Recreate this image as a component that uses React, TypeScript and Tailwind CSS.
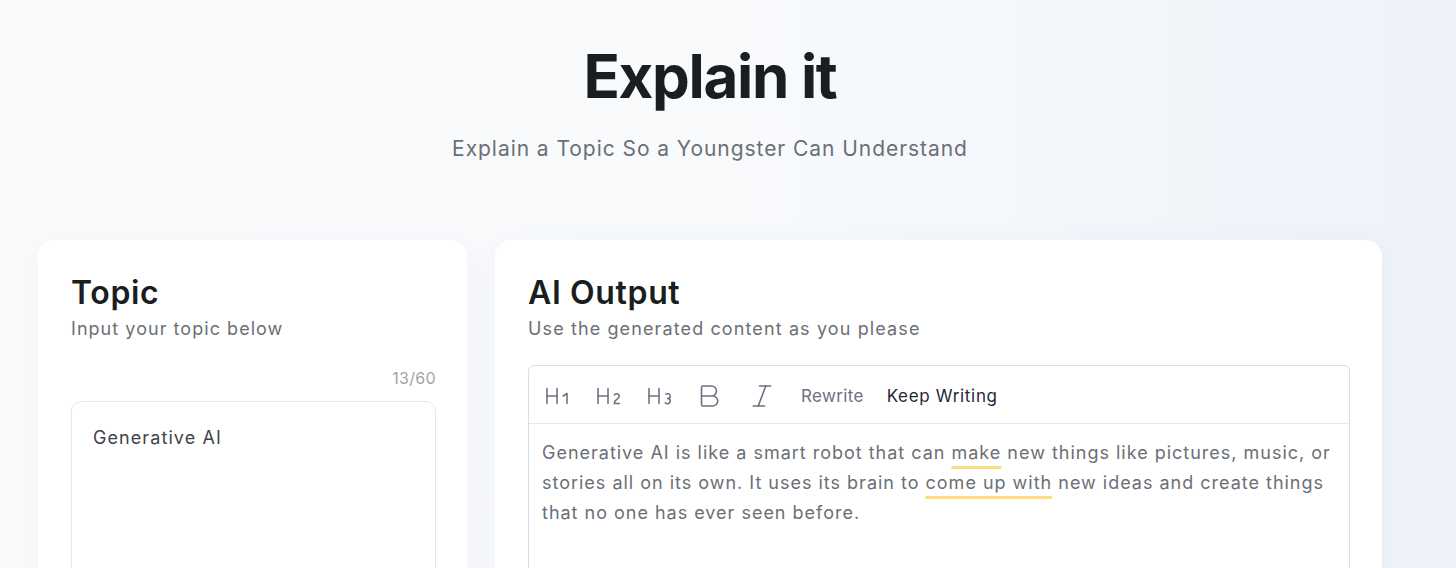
import { Heading1, Heading2, Heading3, Bold, Italic } from 'lucide-react'

const font = { fontFamily: 'Inter, "Noto Sans", sans-serif' }

function Toolbar() {
  return (
    <div className="flex h-[58px] items-center border-b border-[#e5e7eb] pl-[13px] pt-[2px]">
      <button className="text-[#6b7280]">
        <Heading1 size={30} strokeWidth={1.25} />
      </button>
      <button className="ml-[21px] text-[#6b7280]">
        <Heading2 size={30} strokeWidth={1.25} />
      </button>
      <button className="ml-[21px] text-[#6b7280]">
        <Heading3 size={30} strokeWidth={1.25} />
      </button>
      <button className="ml-[20px] text-[#6b7280]">
        <Bold size={30} strokeWidth={1.3} />
      </button>
      <button className="ml-[23px] text-[#6b7280]">
        <Italic size={30} strokeWidth={1.3} />
      </button>
      <button className="ml-[24px] pt-[3px] text-[17px] tracking-[0.02em] text-[#6b7280]">Rewrite</button>
      <button className="ml-[23px] pt-[3px] text-[17px] tracking-[0.04em] text-[#1f2937]">Keep Writing</button>
    </div>
  )
}

export default function App() {
  return (
    <div
      className="min-h-[568px] w-full bg-linear-to-r from-[#fbfbfc] via-[#f8fafc] to-[#eef3fa] pb-10"
      style={font}
    >
      <div className="ml-[38px] w-[1344px]">
        <header className="flex flex-col items-center pt-[46px]">
          <h1 className="text-[60px] font-bold leading-none tracking-[-0.022em] text-[#1a1e21]">Explain it</h1>
          <p className="mt-[29px] text-[21px] leading-7 tracking-[0.045em] text-[#6b6f76]">
            Explain a Topic So a Youngster Can Understand
          </p>
        </header>

        <div className="mt-[77px] flex gap-[28px]">
          <section className="h-[420px] w-[429px] rounded-2xl bg-white pl-[33px] pr-[31px] pt-[33px] shadow-[0_4px_30px_rgba(30,60,120,0.05)]">
            <h2 className="text-[32px] font-semibold leading-10 tracking-[0.02em] text-[#1a1e21]">Topic</h2>
            <p className="mt-[2px] text-[18px] leading-7 tracking-[0.058em] text-[#6b6f76]">Input your topic below</p>
            <div className="mt-[23px] text-right text-[16px] leading-6 tracking-[0.02em] text-[#a0a4aa]">13/60</div>
            <div className="mt-[11px] h-[300px] rounded-[10px] border border-[#e5e7eb] px-[21px] pt-[22px]">
              <p className="text-[18px] leading-7 tracking-[0.06em] text-[#3f444a]">Generative AI</p>
            </div>
          </section>

          <section className="h-[420px] w-[887px] rounded-2xl bg-white px-[33px] pt-[33px] shadow-[0_4px_30px_rgba(30,60,120,0.05)]">
            <h2 className="text-[32px] font-semibold leading-10 tracking-[0.02em] text-[#1a1e21]">AI Output</h2>
            <p className="mt-[2px] text-[18px] leading-7 tracking-[0.062em] text-[#6b6f76]">
              Use the generated content as you please
            </p>
            <div className="mt-[22px] h-[300px] w-[822px] rounded-md border border-[#d9dce0]">
              <Toolbar />
              <div className="px-[13px] pt-[14px] text-[18px] leading-[30px] tracking-[0.055em] text-[#6b6f76]">
                Generative AI is like a smart robot that can{' '}
                <span className="underline decoration-[#fddc7f] decoration-[3px] underline-offset-[7px]">make</span> new
                things like pictures, music, or stories all on its own. It uses its brain to{' '}
                <span className="underline decoration-[#fddc7f] decoration-[3px] underline-offset-[7px]">
                  come up with
                </span>{' '}
                new ideas and create things that no one has ever seen before.
              </div>
            </div>
          </section>
        </div>
      </div>
    </div>
  )
}
